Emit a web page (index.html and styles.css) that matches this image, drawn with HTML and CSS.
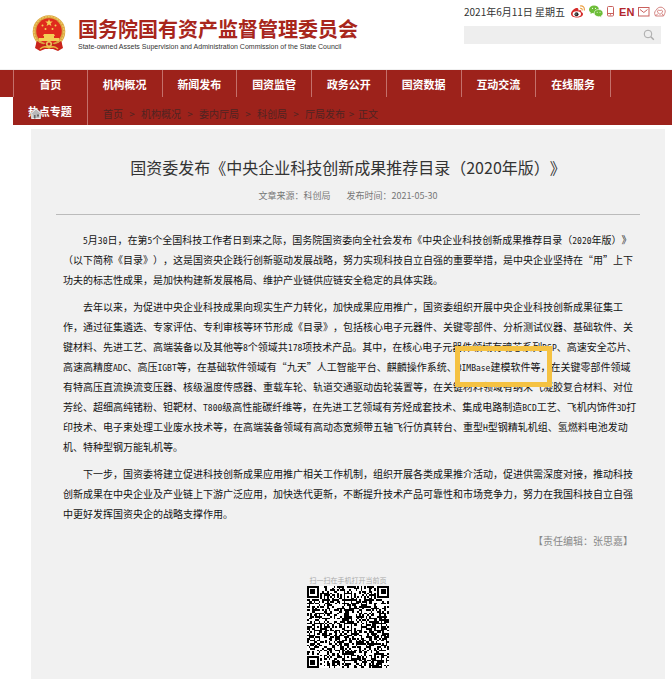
FILE: index.html
```html
<!DOCTYPE html>
<html lang="zh-CN">
<head>
<meta charset="utf-8">
<title>国资委发布《中央企业科技创新成果推荐目录（2020年版）》</title>
<link rel="stylesheet" href="styles.css">
</head>
<body>
<header class="site-header">
  <div class="brand">
    <svg class="emblem" viewBox="0 0 34 37" aria-hidden="true">
      <path d="M5 25 L3 33 L8 36 L13 34 H21 L26 36 L31 33 L29 25Z" fill="#c9241b"/>
      <circle cx="17" cy="16.500" r="16.300" fill="#d9a441"/>
      <circle cx="17" cy="16.500" r="15" fill="none" stroke="#edc65f" stroke-width="1.500" stroke-dasharray="2 1"/>
      <circle cx="17" cy="16" r="12.800" fill="#df2a1d"/>
      <path d="M17 4l1 2.600h2.800l-2.200 1.700.8 2.700-2.400-1.600-2.400 1.600.8-2.700-2.200-1.700H16z" fill="#f3cf55"/>
      <g fill="#f3cf55"><circle cx="10.500" cy="10.500" r="1"/><circle cx="23.500" cy="10.500" r="1"/><circle cx="13.500" cy="14" r="1"/><circle cx="20.500" cy="14" r="1"/>
      <path d="M12 19h10l1 2h-1v2h5v3H7v-3h5v-2h-1z"/></g>
      <path d="M5 26q6 5 9 2h6q3 3 9-2l1 4q-7 3-10 1h-6q-3 2-10-1z" fill="#c9241b"/>
      <circle cx="17" cy="29" r="3" fill="#edc65f"/><circle cx="17" cy="29" r="1.500" fill="#c9241b"/>
      <path d="M8 34q4-4 9-1 5-3 9 1" fill="none" stroke="#e8b73e" stroke-width="1.500"/>
    </svg>
    <div>
      <div class="brand-name">国务院国有资产监督管理委员会</div>
      <div class="brand-en">State-owned Assets Supervision and Administration Commission of the State Council</div>
    </div>
  </div>
  <div class="tools">
    <div class="tool-row">
      <span class="date">2021年6月11日 星期五</span>
      <a href="#" class="weibo" aria-label="微博"><svg width="14" height="13" viewBox="0 0 14 13"><path d="M5 3C2.500 4 0 6.500 0 9c0 4.500 11.500 5 12 .3.100-1.300-.8-2-1.800-2.200.5-1.800-.6-2.400-2.800-1.500C7.700 3.500 6.800 2.600 5 3z" fill="#d52b2a"/><ellipse cx="5.800" cy="9" rx="4.200" ry="2.800" fill="#fff"/><circle cx="5.500" cy="9.200" r="2" fill="#222"/><circle cx="5" cy="9" r=".6" fill="#fff"/><path d="M9 1c2.800-.6 5 1.500 4.200 4.500M9 3.300c1.500-.3 2.400.6 2.200 2" fill="none" stroke="#eba044" stroke-width="1.200"/></svg></a>
      <a href="#" class="wechat" aria-label="微信"><svg width="14" height="13" viewBox="0 0 14 13"><path d="M5 .5C2.200.5 0 2.200 0 4.500 0 5.800.7 6.900 1.800 7.600L1.500 9l1.700-.9c4.300.8 6.700-1.200 6.700-3.600S7.800.5 5 .5z" fill="#6dbd38"/><path d="M9.600 4.500c-2.500 0-4.400 1.600-4.400 3.600s1.900 3.600 4.400 3.600l1.200-.1 1.600.9-.3-1.400c1.200-.7 1.900-1.700 1.900-3 0-2-1.900-3.600-4.400-3.600z" fill="#6dbd38" stroke="#fff" stroke-width=".6"/><g fill="#fff"><circle cx="3.500" cy="3.300" r=".6"/><circle cx="6.500" cy="3.300" r=".6"/><circle cx="8.200" cy="7.200" r=".5"/><circle cx="11" cy="7.200" r=".5"/></g></svg></a>
      <a href="#" class="phone" aria-label="手机版"><svg width="8" height="11" viewBox="0 0 8 11" fill="none" stroke="#c9605c"><rect x=".5" y=".5" width="6" height="9.500" rx="1"/><path d="M.5 7.500h6M3 8.800h1"/></svg></a>
      <a href="#" class="en">EN</a>
      <a href="#" class="mail" aria-label="邮箱"><svg width="12" height="10" viewBox="0 0 12 10" fill="none" stroke="#c9605c"><rect x=".5" y=".5" width="10.500" height="8.500"/><path d="M2 2.500l3.800 3 3.700-3"/></svg></a>
      <a href="#" class="care" aria-label="关怀版"><svg width="12" height="11" viewBox="0 0 12 11" fill="none" stroke="#cf7774" stroke-width=".9"><path d="M2.500 4C3 1 8.500 0 10 3c1.500.5 1.500 3 .7 4.500L9.500 10h-8L.6 7.500Q.3 5 2.500 4zM6 8.500L3.500 6c-.5-2 2-2.500 2.500-1 .5-1.500 3-1 2.500 1zM1.500 10L4 7.500M9.500 10L8 7.500"/></svg></a>
    </div>
    <form class="search">
      <input type="search" aria-label="站内搜索">
      <button type="button" aria-label="搜索"><svg width="12" height="12" viewBox="0 0 12 12" fill="none" stroke="#aaa"><circle cx="5" cy="5" r="3.800"/><path d="M7.800 7.800l3 3" stroke-width="1.400"/></svg></button>
    </form>
  </div>
</header>

<nav class="main-nav" aria-label="主导航">
  <div class="nav-edge"></div>
  <ul>
    <li><a href="#">首页</a></li>
    <li><a href="#">机构概况</a></li>
    <li><a href="#">新闻发布</a></li>
    <li><a href="#">国资监管</a></li>
    <li><a href="#">政务公开</a></li>
    <li><a href="#">国资数据</a></li>
    <li><a href="#">互动交流</a></li>
    <li><a href="#">在线服务</a></li>
    <li><a href="#">热点专题</a></li>
  </ul>
  <div class="crumbs">
    <svg class="home" width="12" height="11" viewBox="0 0 12 11" aria-hidden="true"><path d="M0 5.500L6 0l6 5.500-1 1V11H1V6.500z" fill="#b9b9b9"/><path d="M1 5.500L6 1l5 4.500M2 6v4.500h8V6" fill="none" stroke="#eee"/><path d="M4 7h1.500v3.500H4zM7 6.500h2v2H7z" fill="#666"/></svg>
    <a href="#">首页</a><i>&gt;</i><a href="#">机构概况</a><i>&gt;</i><a href="#">委内厅局</a><i>&gt;</i><a href="#">科创局</a><i>&gt;</i><a href="#">厅局发布</a><i class="tight">&gt;</i><span>正文</span>
  </div>
</nav>

<main class="article">
  <div class="article-head">
    <h1>国资委发布《中央企业科技创新成果推荐目录（2020年版）》</h1>
    <div class="meta"><span>文章来源：科创局</span><span>发布时间：2021-05-30</span></div>
  </div>
  <div class="article-body">
    <p><b>5</b>月<b>30</b>日，在第<b>5</b>个全国科技工作者日到来之际，国务院国资委向全社会发布《中央企业科技创新成果推荐目录（<b>2020</b>年版）》<br>（以下简称《目录》），这是国资央企践行创新驱动发展战略，努力实现科技自立自强的重要举措，是中央企业坚持在“用”上下<br>功夫的标志性成果，是加快构建新发展格局、维护产业链供应链安全稳定的具体实践。</p>
    <p>去年以来，为促进中央企业科技成果向现实生产力转化，加快成果应用推广，国资委组织开展中央企业科技创新成果征集工<br>作，通过征集遴选、专家评估、专利审核等环节形成《目录》，包括核心电子元器件、关键零部件、分析测试仪器、基础软件、关<br>键材料、先进工艺、高端装备以及其他等<b>8</b>个领域共<b>178</b>项技术产品。其中，在核心电子元器件领域有魂芯系列<b>DSP</b>、高速安全芯片、<br>高速高精度<b>ADC</b>、高压<b>IGBT</b>等，在基础软件领域有“九天”人工智能平台、麒麟操作系统、<mark><b>BIMBase</b>建模软件等，</mark>在关键零部件领域<br>有特高压直流换流变压器、核级温度传感器、重载车轮、轨道交通驱动齿轮装置等，在关键材料领域有纳米气凝胶复合材料、对位<br>芳纶、超细高纯锗粉、钽靶材、<b>T800</b>级高性能碳纤维等，在先进工艺领域有芳烃成套技术、集成电路制造<b>BCD</b>工艺、飞机内饰件<b>3D</b>打<br>印技术、电子束处理工业废水技术等，在高端装备领域有高动态宽频带五轴飞行仿真转台、重型<b>H</b>型钢精轧机组、氢燃料电池发动<br>机、特种型钢万能轧机等。</p>
    <p>下一步，国资委将建立促进科技创新成果应用推广相关工作机制，组织开展各类成果推介活动，促进供需深度对接，推动科技<br>创新成果在中央企业及产业链上下游广泛应用，加快迭代更新，不断提升技术产品可靠性和市场竞争力，努力在我国科技自立自强<br>中更好发挥国资央企的战略支撑作用。</p>
    <div class="editor">【责任编辑：张思嘉】</div>
  </div>
  <div class="qr">
    <div class="qr-label">扫一扫在手机打开当前页</div>
    <svg id="qr" viewBox="0 0 49 49" role="img" aria-label="二维码"></svg>
  </div>
</main>
<script src="qr.js"></script>
</body>
</html>
```
FILE: styles.css
```css
* { box-sizing: border-box; }

body {
  margin: 0;
  background: #fff;
  color: #333;
  font-family: "Noto Sans CJK SC", sans-serif;
  font-size: 10px;
  text-spacing-trim: space-all;
}

a { color: inherit; text-decoration: none; }
svg { display: block; }

.site-header {
  display: flex;
  justify-content: space-between;
  height: 70px;
  border-bottom: 1px solid #f0f0f0;
}

.brand {
  display: flex;
  gap: 12px;
  padding: 15px 0 0 32px;
}

.emblem { width: 34px; height: 37px; }

.brand-name {
  color: #a8261c;
  font-size: 20px;
  font-weight: 700;
  line-height: 27px;
  white-space: nowrap;
}

.brand-en {
  color: #333;
  font-family: "Liberation Sans", sans-serif;
  font-size: 7px;
  line-height: 9px;
  white-space: nowrap;
}

.tools { width: 208px; flex: none; }

.tool-row {
  display: flex;
  align-items: center;
  gap: 4px;
  height: 26px;
  padding-bottom: 3px;
}

.date { line-height: 16px; white-space: nowrap; margin-right: 2px; }

.en {
  color: #b3272d;
  font-family: "Liberation Sans", sans-serif;
  font-size: 11px;
  font-weight: 700;
}

.search {
  display: flex;
  height: 18px;
  margin-right: 11px;
  background: #eee;
}

.search input {
  flex: 1;
  min-width: 0;
  border: 0;
  background: none;
  font-size: 10px;
}

.search button {
  width: 24px;
  padding: 0 6px;
  border: 0;
  background: none;
}

.main-nav { position: relative; display: flex; color: #fff; }

.nav-edge { width: 13px; height: 27px; background: #9d221b; }

.main-nav ul {
  flex: 1;
  display: grid;
  grid-template-columns: repeat(8, 1fr);
  grid-template-rows: 27px 28px;
  margin: 0;
  padding: 0 61px 0 0;
  list-style: none;
  background: #9d221b;
}

.main-nav li {
  border-right: 1px solid #c4706b;
  font-size: 11px;
  font-weight: 700;
  line-height: 28px;
  text-align: center;
}

.main-nav li:first-child { border-left: 1px solid #c4706b; }

.crumbs {
  position: absolute;
  left: 30px;
  top: 36px;
  display: flex;
  color: #4f2422;
  line-height: 16px;
}

.crumbs .home { margin: 2px 61px 0 0; }
.crumbs i { width: 18px; font-style: normal; text-align: center; }
.crumbs .tight { width: 13px; }

.article {
  margin: 4px 7px 0 31px;
  padding-bottom: 11px;
  background: #f1f1f1;
}

.article-head {
  margin: 0 25px;
  padding-top: 26px;
  border-bottom: 1px solid #bbb;
  text-align: center;
}

h1 {
  margin: 0;
  font-size: 16px;
  font-weight: 400;
  line-height: 24px;
}

.meta {
  display: flex;
  justify-content: center;
  gap: 16px;
  padding: 9px 0 10px;
  color: #777;
  font-size: 9px;
  line-height: 16px;
}

.article-body {
  padding: 15px 20px 0 32px;
  color: #111;
  line-height: 20px;
}

.article-body p {
  margin: 0 0 7px;
  text-indent: 2em;
}

.article-body b {
  font-family: "DejaVu Sans Mono", monospace;
  font-size: 8px;
  font-weight: 400;
  line-height: 1;
}

.article-body mark {
  position: relative;
  background: none;
  color: inherit;
}

.article-body mark::after {
  content: "";
  position: absolute;
  inset: -13px -2px;
  border: 5px solid #f5c242;
}

.editor { margin-right: 12px; color: #888; text-align: right; }

.qr { width: 82px; margin: 23px auto 0; }

.qr-label {
  display: flex;
  justify-content: center;
  color: #aaa;
  font-size: 7px;
  line-height: 12px;
  white-space: nowrap;
}

#qr { width: 82px; height: 82px; }
```
FILE: qr.js
```js
// Draws a 49-module code: data cells, timing lines, finder and alignment marks.
const size = 49;
let seed = 20210530;
const next = () => (seed = (seed * 1103515245 + 12345) % 2147483648) / 2147483648;
const grid = Array.from({ length: size }, () => Array.from({ length: size }, () => next() < 0.5));

for (let i = 0; i < size; i++) grid[6][i] = grid[i][6] = i % 2 === 0;

function mark(cx, cy, outer, gap) {
  for (let y = -outer; y <= outer; y++) {
    for (let x = -outer; x <= outer; x++) {
      if (grid[cy + y] && cx + x >= 0 && cx + x < size) {
        grid[cy + y][cx + x] = !gap.includes(Math.max(Math.abs(x), Math.abs(y)));
      }
    }
  }
}

[[3, 3], [45, 3], [3, 45]].forEach(([x, y]) => mark(x, y, 4, [2, 4]));
[[24, 6], [6, 24], [24, 24], [42, 24], [24, 42], [42, 42]].forEach(([x, y]) => mark(x, y, 2, [1]));

let d = "";
grid.forEach((row, y) => row.forEach((on, x) => { if (on) d += `M${x} ${y}h1v1h-1z`; }));
const svg = document.getElementById("qr");
svg.innerHTML = `<rect width="49" height="49" fill="#fff"/><path d="${d}" fill="#000" shape-rendering="crispEdges"/>`;
```
